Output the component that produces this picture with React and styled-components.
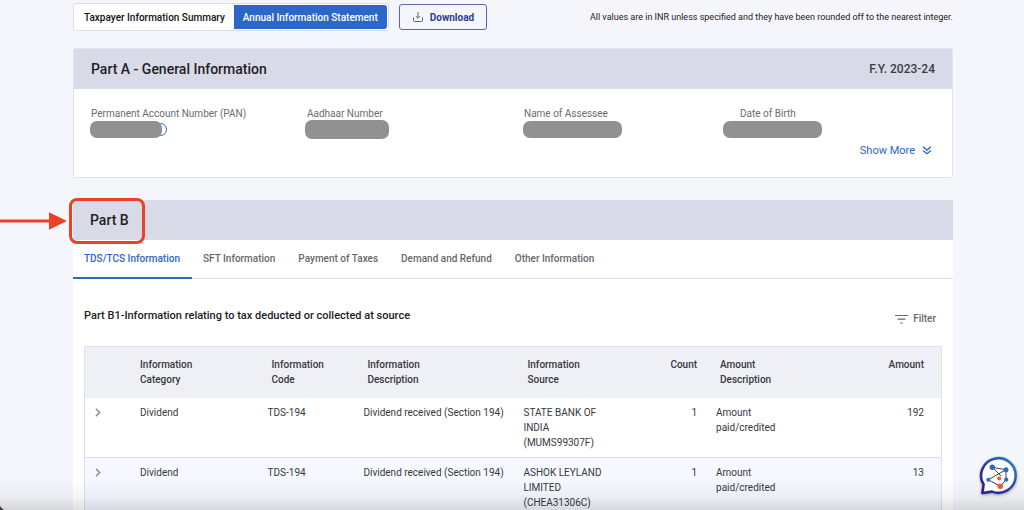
import React from "react";
import styled, { createGlobalStyle } from "styled-components";

const GlobalStyle = createGlobalStyle`
  *, *::before, *::after { box-sizing: border-box; }
  body {
    margin: 0;
    background: #f5f6fb;
    color: #1f2024;
    font-family: Roboto, "Liberation Sans", sans-serif;
    font-size: 10px;
    line-height: 15px;
  }
  button { font: inherit; margin: 0; padding: 0; border: 0; background: none; cursor: pointer; }
  h2, h3, dl, dd { margin: 0; }
`;

const Page = styled.div`
  height: 100vh;
  overflow: hidden;
  padding: 3px 71px 0 73px;
`;

const Toolbar = styled.header`
  display: flex;
  align-items: center;
  gap: 10px;
`;

const Segmented = styled.div`
  display: flex;
  height: 28px;
  padding: 1px;
  background: #fff;
  border: 1px solid #dcdde6;
  border-radius: 3px;
`;

const Segment = styled.button`
  padding: 0 9px;
  font-weight: 500;
  color: ${(p) => (p.$active ? "#fff" : "#101114")};
  background: ${(p) => (p.$active ? "#2c66c8" : "#fff")};
  border-radius: ${(p) => (p.$active ? "0 3px 3px 0" : "3px 0 0 3px")};
`;

const DownloadButton = styled.button`
  display: flex;
  align-items: center;
  gap: 6px;
  height: 26px;
  padding: 0 12px;
  color: #303c8f;
  font-weight: 700;
  border: 1px solid #5a66b4;
  border-radius: 3px;
`;

const Note = styled.p`
  margin: 0 0 0 auto;
  font-size: 9px;
`;

const Banner = styled.div`
  display: flex;
  align-items: center;
  justify-content: space-between;
  height: 40px;
  padding: 0 17px;
  background: #d9dae7;
`;

const BannerTitle = styled.h2`
  font-size: 14px;
  font-weight: 500;
  line-height: 20px;
`;

const Year = styled.span`
  font-size: 12px;
  font-weight: 500;
  color: #3c3d44;
`;

const Card = styled.section`
  margin-top: 17px;
  background: #fff;
  border: 1px solid #e2e3ec;
  border-radius: 2px;
`;

const Section = styled.section`
  margin-top: 22px;
  background: #fff;
`;

const Fields = styled.dl`
  display: grid;
  grid-template-columns: 215fr 218fr 200fr 213fr;
  padding: 17px 16px 0;
`;

const Field = styled.div`
  color: #6b6c70;
  dt { padding-left: ${(p) => p.$indent || 1}px; }
`;

const Masked = styled.dd`
  display: flex;
  align-items: center;
  height: 17px;
`;

const Mask = styled.span`
  width: ${(p) => p.$width}px;
  height: ${(p) => p.$height || 17}px;
  background: #919191;
  border-radius: 7px;
  z-index: 1;
`;

const InfoRing = styled.span`
  width: 13px;
  height: 13px;
  margin-left: -8px;
  border: 1px solid #2c66c8;
  border-radius: 50%;
`;

const ShowMore = styled.button`
  display: flex;
  align-items: center;
  gap: 7px;
  margin: 5px 20px 19px auto;
  color: #2c66c8;
  font-size: 11px;
`;

const Tabs = styled.nav`
  display: flex;
  height: 39px;
  border-bottom: 1px solid #dfe0ec;
`;

const Tab = styled.button`
  height: 39px;
  padding: 0 12px 0 11px;
  font-weight: 500;
  color: ${(p) => (p.$active ? "#2c66c8" : "#66676c")};
  border-bottom: 2px solid ${(p) => (p.$active ? "#2c66c8" : "transparent")};
`;

const Panel = styled.div`
  padding: 29px 11px 0;
`;

const PanelHead = styled.div`
  display: flex;
  align-items: flex-start;
  justify-content: space-between;
  padding-right: 6px;
  margin-bottom: 20px;
`;

const PanelTitle = styled.h3`
  font-size: 11px;
  font-weight: 500;
  line-height: 16px;
`;

const FilterButton = styled.button`
  display: flex;
  align-items: center;
  gap: 5px;
  margin-top: 3px;
  font-weight: 500;
  color: #66676c;
`;

const Table = styled.table`
  width: 100%;
  table-layout: fixed;
  border-collapse: separate;
  border-spacing: 0;
  border: 1px solid #dfe0ec;
  white-space: pre-line;
`;

const HeadCell = styled.th`
  padding: 10px ${(p) => p.$end || 9}px 11px ${(p) => p.$start || 14}px;
  background: #eff0f6;
  color: #37383d;
  font-weight: 500;
  text-align: ${(p) => p.$align || "left"};
  vertical-align: top;
`;

const Row = styled.tr`
  background: ${(p) => (p.$tinted ? "#f5f9ff" : "#fff")};
`;

const Cell = styled.td`
  padding: 7px ${(p) => p.$end || 9}px 7px 10px;
  border-bottom: 1px solid #d9dbe9;
  color: #37383d;
  text-align: ${(p) => p.$align || "left"};
  vertical-align: top;
`;

const Expand = styled.button`
  display: flex;
  align-items: center;
  height: 15px;
`;

const Callout = styled.div`
  position: absolute;
  top: 198px;
  left: 0;
  display: flex;
  align-items: center;
`;

const CalloutBox = styled.span`
  width: 76px;
  height: 46px;
  margin-left: 2px;
  border: 3px solid #ec4127;
  border-radius: 8px;
`;

const Shade = styled.div`
  position: fixed;
  inset: auto 0 0;
  height: 32px;
  pointer-events: none;
  background:
    radial-gradient(circle at 10px 0, transparent 11px, #4d3f3c 12px) left bottom / 10px 10px no-repeat,
    linear-gradient(to bottom, rgba(0, 0, 0, 0), rgba(0, 0, 0, 0.04) 60%, rgba(0, 0, 0, 0.13));
`;

const ChatButton = styled.button`
  position: fixed;
  right: 3px;
  bottom: 10px;
  width: 42px;
  height: 44px;
`;

const columns = [
  { width: "45px" },
  { label: "Information\nCategory", width: "14.9%", start: 10 },
  { label: "Information\nCode", width: "11.2%" },
  { label: "Information\nDescription", width: "18.7%", end: 6 },
  { label: "Information\nSource", width: "12%" },
  { label: "Count", width: "10.5%", align: "right" },
  { label: "Amount\nDescription", width: "11%" },
  { label: "Amount", align: "right", end: 17 },
];

const rows = [
  ["Dividend", "TDS-194", "Dividend received (Section 194)", "STATE BANK OF INDIA (MUMS99307F)", "1", "Amount paid/credited", "192"],
  ["Dividend", "TDS-194", "Dividend received (Section 194)", "ASHOK LEYLAND LIMITED (CHEA31306C)", "1", "Amount paid/credited", "13"],
];

const fields = [
  { label: "Permanent Account Number (PAN)", mask: 72, ring: true },
  { label: "Aadhaar Number", mask: 84, height: 19, indent: 2 },
  { label: "Name of Assessee", mask: 99 },
  { label: "Date of Birth", mask: 99, indent: 17 },
];

const tabs = ["TDS/TCS Information", "SFT Information", "Payment of Taxes", "Demand and Refund", "Other Information"];

const DownloadIcon = () => (
  <svg width="12" height="12" viewBox="0 0 12 12" fill="none" stroke="#66676c" aria-hidden="true">
    <path d="M6 1v6M3.8 5L6 7.2 8.2 5M1.5 6.5v3a1 1 0 0 0 1 1h7a1 1 0 0 0 1-1v-3" />
  </svg>
);

const DoubleChevron = () => (
  <svg width="10" height="10" viewBox="0 0 10 10" fill="none" stroke="currentColor" strokeWidth="1.4" aria-hidden="true">
    <path d="M1 .8l4 3.2 4-3.2M1 4.5l4 3.2 4-3.2" />
  </svg>
);

const FilterIcon = () => (
  <svg width="13" height="10" viewBox="0 0 13 10" fill="none" stroke="currentColor" strokeWidth="1.2" aria-hidden="true">
    <path d="M0 1.5h13M2.5 5.2h8M5.2 9h2.6" />
  </svg>
);

const ChevronIcon = () => (
  <svg width="6" height="9" viewBox="0 0 6 9" fill="none" stroke="#909197" strokeWidth="1.6" aria-hidden="true">
    <path d="M1 .9l3.6 3.6L1 8.1" />
  </svg>
);

const ArrowIcon = () => (
  <svg width="67" height="18" viewBox="0 0 67 18" fill="#ec4127" aria-hidden="true">
    <path d="M0 7.4h49V.2L67 9l-18 8.8v-7.2H0z" />
  </svg>
);

const ChatIcon = () => (
  <svg width="42" height="44" viewBox="0 0 42 44" aria-hidden="true">
    <defs>
      <linearGradient id="bubble" x1="0" y1="1" x2="1" y2="0">
        <stop offset="0" stopColor="#2d2190" />
        <stop offset=".45" stopColor="#2c3a9d" />
        <stop offset="1" stopColor="#2787cf" />
      </linearGradient>
      <filter id="bubbleShadow" x="-20%" y="-20%" width="140%" height="140%">
        <feDropShadow dx="0" dy="1" stdDeviation="1.5" floodOpacity=".35" />
      </filter>
    </defs>
    <path
      d="M3.4 37L4.6 28.5A17.3 17.3 0 1 1 13 35.6z"
      fill="#fff"
      stroke="url(#bubble)"
      strokeWidth="2.6"
      strokeLinejoin="round"
      filter="url(#bubbleShadow)"
    />
    <path
      d="M13.3 11.3L27 13.7M13.3 11.3L22 20M27 13.7L9.3 23.7M27 13.7V23.7M27 23.7L21.3 30.3M9.3 23.7L21.3 30.3"
      fill="none"
      stroke="#2b2d36"
      strokeWidth=".9"
    />
    <g fill="#2a6cc4">
      <circle cx="13.3" cy="11.3" r="2.7" />
      <circle cx="27" cy="13.7" r="2.5" />
      <circle cx="9.3" cy="23.7" r="2" />
      <circle cx="27.2" cy="23.7" r="2.1" />
    </g>
    <g fill="#ee5a2c">
      <circle cx="20.2" cy="22.5" r="2" />
      <circle cx="21.3" cy="30.3" r="2.7" />
    </g>
  </svg>
);

export default function App() {
  return (
    <>
      <GlobalStyle />
      <Page>
        <Toolbar>
          <Segmented>
            <Segment>Taxpayer Information Summary</Segment>
            <Segment $active>Annual Information Statement</Segment>
          </Segmented>
          <DownloadButton>
            <DownloadIcon />
            Download
          </DownloadButton>
          <Note>All values are in INR unless specified and they have been rounded off to the nearest integer.</Note>
        </Toolbar>

        <Card>
          <Banner>
            <BannerTitle>Part A - General Information</BannerTitle>
            <Year>F.Y. 2023-24</Year>
          </Banner>
          <Fields>
            {fields.map((f) => (
              <Field key={f.label} $indent={f.indent}>
                <dt>{f.label}</dt>
                <Masked>
                  <Mask $width={f.mask} $height={f.height} />
                  {f.ring && <InfoRing />}
                </Masked>
              </Field>
            ))}
          </Fields>
          <ShowMore>
            Show More
            <DoubleChevron />
          </ShowMore>
        </Card>

        <Section>
          <Banner>
            <BannerTitle>Part B</BannerTitle>
          </Banner>
          <Tabs>
            {tabs.map((t, i) => (
              <Tab key={t} $active={i === 0}>{t}</Tab>
            ))}
          </Tabs>
          <Panel>
            <PanelHead>
              <PanelTitle>Part B1-Information relating to tax deducted or collected at source</PanelTitle>
              <FilterButton>
                <FilterIcon />
                Filter
              </FilterButton>
            </PanelHead>
            <Table>
              <colgroup>
                {columns.map((c, i) => (
                  <col key={i} width={c.width} />
                ))}
              </colgroup>
              <thead>
                <tr>
                  {columns.map((c, i) => (
                    <HeadCell key={i} $align={c.align} $start={c.start} $end={c.end}>{c.label}</HeadCell>
                  ))}
                </tr>
              </thead>
              <tbody>
                {rows.map((r, i) => (
                  <Row key={i} $tinted={i % 2 === 1}>
                    <Cell>
                      <Expand aria-label="Expand row">
                        <ChevronIcon />
                      </Expand>
                    </Cell>
                    {r.map((value, j) => (
                      <Cell key={j} $align={columns[j + 1].align} $end={columns[j + 1].end}>{value}</Cell>
                    ))}
                  </Row>
                ))}
              </tbody>
            </Table>
          </Panel>
        </Section>
      </Page>
      <Callout>
        <ArrowIcon />
        <CalloutBox />
      </Callout>
      <Shade />
      <ChatButton aria-label="Open chat">
        <ChatIcon />
      </ChatButton>
    </>
  );
}
